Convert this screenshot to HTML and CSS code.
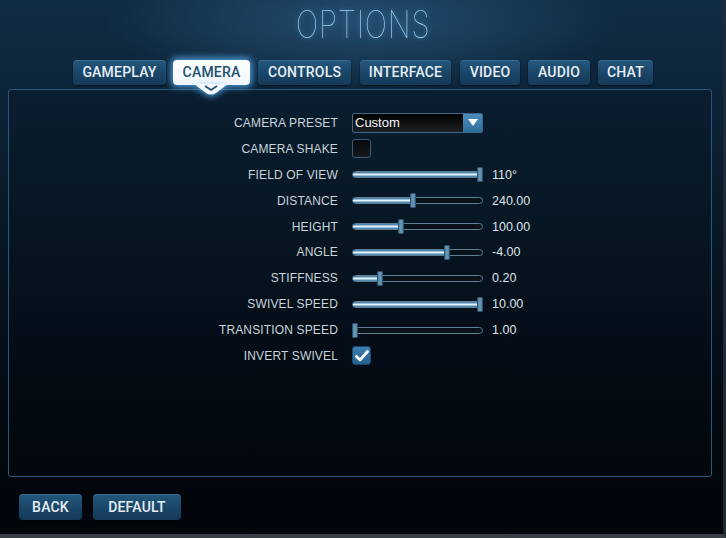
FILE: index.html
```html
<!DOCTYPE html>
<html>
<head>
<meta charset="utf-8">
<link rel="stylesheet" href="styles.css">
</head>
<body>
<div class="screen">
  <header class="header">
    <h1 class="title">OPTIONS</h1>
  </header>
  <nav class="tabs">
    <div class="tab t-gameplay">GAMEPLAY</div>
    <div class="tab t-camera active">CAMERA
      <svg class="pointer" width="34" height="12" viewBox="0 0 34 12"><path d="M0 0 H34 L22 9 Q17 12 12 9 Z" fill="#f4f9fd"/><path d="M11 2 L17 6 L23 2" fill="none" stroke="#23506f" stroke-width="1.6"/></svg>
    </div>
    <div class="tab t-controls">CONTROLS</div>
    <div class="tab t-interface">INTERFACE</div>
    <div class="tab t-video">VIDEO</div>
    <div class="tab t-audio">AUDIO</div>
    <div class="tab t-chat">CHAT</div>
  </nav>
  <main class="panel">
    <div class="form">
      <div class="label">CAMERA PRESET</div>
      <div class="ctrl">
        <div class="select"><span class="select-text">Custom</span><span class="select-btn"><svg width="10" height="7" viewBox="0 0 10 7"><path d="M0 0 H10 L5 7 Z" fill="#fff"/></svg></span></div>
      </div>
      <div class="value"></div>

      <div class="label">CAMERA SHAKE</div>
      <div class="ctrl"><div class="check"></div></div>
      <div class="value"></div>

      <div class="label">FIELD OF VIEW</div>
      <div class="ctrl"><div class="slider"><div class="fill" style="width:100%"></div><div class="thumb" style="left:125px"></div></div></div>
      <div class="value">110°</div>

      <div class="label">DISTANCE</div>
      <div class="ctrl"><div class="slider"><div class="fill" style="width:46%"></div><div class="thumb" style="left:58px"></div></div></div>
      <div class="value">240.00</div>

      <div class="label">HEIGHT</div>
      <div class="ctrl"><div class="slider"><div class="fill" style="width:37%"></div><div class="thumb" style="left:46px"></div></div></div>
      <div class="value">100.00</div>

      <div class="label">ANGLE</div>
      <div class="ctrl"><div class="slider"><div class="fill" style="width:72%"></div><div class="thumb" style="left:92px"></div></div></div>
      <div class="value">-4.00</div>

      <div class="label">STIFFNESS</div>
      <div class="ctrl"><div class="slider"><div class="fill" style="width:21%"></div><div class="thumb" style="left:25px"></div></div></div>
      <div class="value">0.20</div>

      <div class="label">SWIVEL SPEED</div>
      <div class="ctrl"><div class="slider"><div class="fill" style="width:100%"></div><div class="thumb" style="left:125px"></div></div></div>
      <div class="value">10.00</div>

      <div class="label">TRANSITION SPEED</div>
      <div class="ctrl"><div class="slider"><div class="fill" style="width:0%"></div><div class="thumb" style="left:0px"></div></div></div>
      <div class="value">1.00</div>

      <div class="label">INVERT SWIVEL</div>
      <div class="ctrl"><div class="check checked"><svg width="14" height="12" viewBox="0 0 14 12"><path d="M1.5 6.5 L5 10 L12.5 1.5" fill="none" stroke="#fff" stroke-width="2.8" stroke-linecap="round" stroke-linejoin="round"/></svg></div></div>
      <div class="value"></div>
    </div>
  </main>
  <footer class="footer">
    <div class="btn back">BACK</div>
    <div class="btn default">DEFAULT</div>
  </footer>
</div>
</body>
</html>
```

FILE: styles.css
```css
html, body {
  margin: 0;
  padding: 0;
  width: 726px;
  height: 538px;
  overflow: hidden;
  background: #02060b;
}
.screen {
  width: 726px;
  height: 538px;
  display: flex;
  flex-direction: column;
  background:
    radial-gradient(ellipse 260px 70px at 363px 22px, rgba(60,120,170,0.45), rgba(60,120,170,0) 100%),
    linear-gradient(180deg, #102c43 0%, #0c2337 20%, #071522 50%, #03080f 80%, #02060b 100%);
  font-family: "Liberation Sans", Arial, sans-serif;
  box-sizing: border-box;
  border-bottom: 4px solid #3a4048;
  border-right: 3px solid #1e2a34;
}
.header {
  height: 52px;
  display: flex;
  justify-content: center;
  align-items: flex-start;
}
.title {
  margin: 4px 0 0 4px;
  font-family: "Inter", "DejaVu Sans", sans-serif;
  font-weight: 100;
  font-size: 38px;
  line-height: 40px;
  letter-spacing: 1px;
  color: #9cd0ee;
  transform: scaleX(0.78);
  text-shadow: 0 0 6px rgba(90,170,230,0.8);
}
.tabs {
  display: flex;
  gap: 8px;
  padding-left: 73px;
  height: 25px;
  margin-top: 8px;
}
.tab, .btn {
  position: relative;
  height: 25px;
  box-sizing: border-box;
  padding: 0;
  text-align: center;
  border-radius: 4px;
  background: linear-gradient(180deg, #24577d 0%, #1a4567 55%, #143a59 100%);
  box-shadow: inset 0 1px 0 rgba(120,180,220,0.25), 0 1px 2px rgba(0,0,0,0.6);
  color: #e6eef4;
  font-family: "Roboto", "Liberation Sans", sans-serif;
  font-weight: 500;
  font-size: 14px;
  line-height: 25px;
  letter-spacing: 0.2px;
  white-space: nowrap;
}
.t-gameplay { width: 93px; }
.t-camera { width: 77px; margin-left: -1px; }
.t-controls { width: 93px; }
.t-interface { width: 91px; margin-left: 1px; }
.t-video { width: 60px; margin-left: 1px; }
.t-audio { width: 62px; }
.t-chat { width: 55px; }
.tab.active {
  background: linear-gradient(180deg, #ffffff 0%, #eef6fc 100%);
  color: #23506f;
  box-shadow: 0 0 7px 2px rgba(90,180,255,0.85);
  z-index: 2;
}
.pointer {
  position: absolute;
  left: 21px;
  top: 24px;
  filter: drop-shadow(0 2px 3px rgba(90,180,255,0.8));
}
.panel {
  margin: 4px 11px 0 8px;
  height: 388px;
  box-sizing: border-box;
  border: 1px solid #2b5878;
  border-radius: 3px;
  background: linear-gradient(180deg, #0a1e30 0%, #071623 35%, #040c15 70%, #02070c 100%);
  padding-top: 20px;
}
.form {
  display: grid;
  grid-template-columns: 329px 131px 1fr;
  grid-auto-rows: 25.9px;
  align-items: center;
}
.label {
  text-align: right;
  color: #c9d3da;
  font-size: 12px;
  letter-spacing: 0.15px;
}
.ctrl {
  margin-left: 14px;
  width: 131px;
  display: flex;
  align-items: center;
}
.value {
  padding-left: 23px;
  color: #dde5ea;
  font-size: 12.5px;
}
.select {
  width: 131px;
  height: 20px;
  box-sizing: border-box;
  display: flex;
  border: 1px solid #3e6886;
  border-radius: 2px;
  background: linear-gradient(180deg, #000000 0%, #111314 60%, #1f2224 100%);
  overflow: hidden;
}
.select-text {
  flex: 1;
  color: #f4f7f9;
  font-size: 13px;
  line-height: 18px;
  padding-left: 2px;
}
.select-btn {
  width: 19px;
  display: flex;
  align-items: center;
  justify-content: center;
  background: linear-gradient(180deg, #4b8cba 0%, #2f6f9d 100%);
}
.check {
  width: 19px;
  height: 19px;
  box-sizing: border-box;
  border: 1px solid #3c5a72;
  border-radius: 3px;
  background: linear-gradient(180deg, #05090d 0%, #15191c 100%);
  display: flex;
  align-items: center;
  justify-content: center;
}
.check.checked {
  background: linear-gradient(180deg, #3b7eb0 0%, #24618f 100%);
  border-color: #1c4868;
}
.slider {
  position: relative;
  width: 131px;
  height: 7px;
  box-sizing: border-box;
  border: 1px solid #5d7d92;
  border-radius: 4px;
  background: #08121b;
}
.fill {
  height: 100%;
  border-radius: 3px;
  background: linear-gradient(180deg, #2c6c9c 0%, #e4f4ff 50%, #2c6c9c 100%);
}
.thumb {
  position: absolute;
  top: -5px;
  width: 6px;
  height: 15px;
  box-sizing: border-box;
  margin-left: -1px;
  border-radius: 1px;
  background: linear-gradient(90deg, #4e7e9e 0%, #6d9dbd 50%, #4e7e9e 100%);
  border: 1px solid #2f546e;
}
.footer {
  display: flex;
  gap: 11px;
  padding-left: 19px;
  margin-top: 17px;
}
.btn {
  height: 26px;
  line-height: 26px;
}
.btn.back { width: 63px; }
.btn.default { width: 88px; }
```
